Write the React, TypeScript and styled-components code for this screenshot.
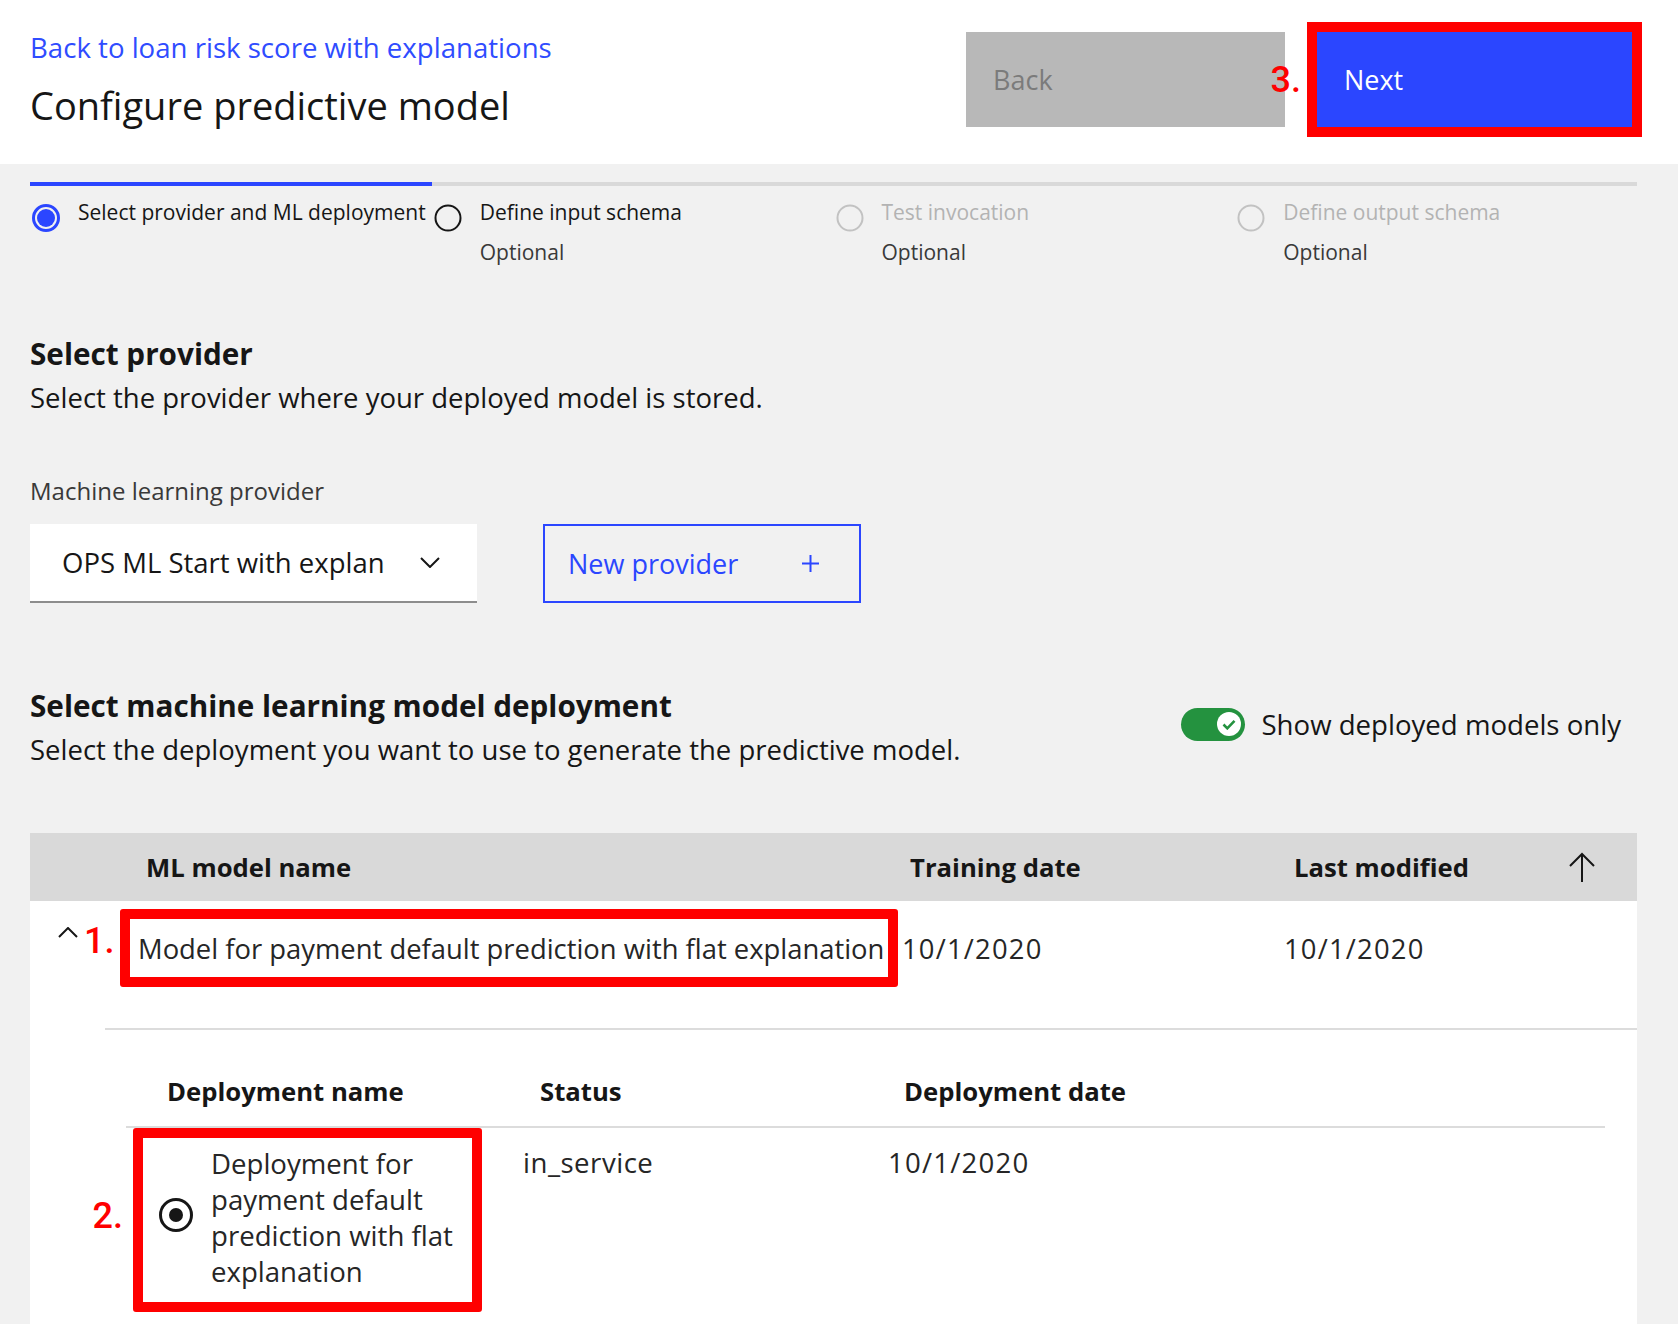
import React from 'react';
import styled, { createGlobalStyle } from 'styled-components';

const GlobalStyle = createGlobalStyle`
  html, body { margin: 0; padding: 0; }
  body {
    background: #f1f1f1;
    font-family: "Open Sans", "Noto Sans", Roboto, sans-serif;
    color: #161616;
  }
  * { box-sizing: border-box; }
`;

const Page = styled.div`
  width: 1678px;
  min-height: 1324px;
  background: #f1f1f1;
  overflow: hidden;
`;

/* ---------- Header ---------- */
const Header = styled.header`
  height: 164px;
  background: #ffffff;
  display: flex;
  justify-content: space-between;
  padding: 0 46px 0 30px;
`;

const TitleBlock = styled.div`
  padding-top: 30px;
`;

const BackLink = styled.a`
  display: block;
  font-size: 27.6px;
  line-height: 34px;
  color: #2f4cff;
  text-decoration: none;
`;

const Title = styled.h1`
  margin: 19px 0 0;
  font-size: 38px;
  line-height: 44px;
  font-weight: 400;
  color: #161616;
`;

const ButtonGroup = styled.div`
  display: flex;
  gap: 32px;
  padding-top: 32px;
`;

const HeaderButton = styled.button<{ $primary?: boolean; $width: number }>`
  position: relative;
  width: ${(p) => p.$width}px;
  height: 95px;
  border: none;
  border-radius: 0;
  padding: 0 0 0 27px;
  text-align: left;
  font-family: inherit;
  font-size: 27px;
  background: ${(p) => (p.$primary ? '#2b46ff' : '#b8b8b8')};
  color: ${(p) => (p.$primary ? '#ffffff' : '#7b7b7b')};
  box-shadow: ${(p) => (p.$primary ? '0 0 0 10px #ff0000' : 'none')};
`;

const Marker = styled.span`
  font-family: Roboto, "Liberation Sans", sans-serif;
  font-size: 36px;
  line-height: 36px;
  font-weight: 500;
  color: #ff0000;
  white-space: nowrap;
`;

const FloatingMarker = styled(Marker)<{ $right: number; $top: number }>`
  position: absolute;
  right: calc(100% + ${(p) => p.$right}px);
  top: ${(p) => p.$top}px;
`;

/* ---------- Progress ---------- */
const Progress = styled.ol`
  list-style: none;
  margin: 0;
  padding: 18px 41px 0 30px;
  display: grid;
  grid-template-columns: repeat(4, 1fr);
`;

const Step = styled.li<{ $active?: boolean }>`
  border-top: 4px solid ${(p) => (p.$active ? '#2b46ff' : '#d9d9d9')};
  display: flex;
  padding-top: 6px;
`;

const StepIcon = styled.svg`
  flex-shrink: 0;
  width: 28px;
  height: 28px;
  margin: 12px 0 0 2px;
`;

const StepText = styled.div`
  margin-left: 18px;
  font-size: 21px;
  line-height: 40px;
  white-space: nowrap;
`;

const StepLabel = styled.div<{ $disabled?: boolean }>`
  color: ${(p) => (p.$disabled ? '#b3b3b3' : '#161616')};
`;

const StepOptional = styled.div`
  color: #393939;
`;

/* ---------- Sections ---------- */
const Section = styled.section`
  padding: 0 41px 0 30px;
`;

const SectionHeadRow = styled.div<{ $top: number }>`
  display: flex;
  justify-content: space-between;
  align-items: flex-start;
  margin-top: ${(p) => p.$top}px;
`;

const SectionTitle = styled.h2`
  margin: 0;
  font-size: 29.7px;
  line-height: 36px;
  font-weight: 700;
`;

const SectionDesc = styled.p`
  margin: 6px 0 0;
  font-size: 27.5px;
  line-height: 40px;
`;

const FieldLabel = styled.div`
  margin-top: 58px;
  font-size: 24px;
  line-height: 30px;
  color: #393939;
`;

const FieldRow = styled.div`
  display: flex;
  gap: 66px;
  margin-top: 18px;
`;

const Dropdown = styled.div`
  width: 447px;
  height: 79px;
  background: #ffffff;
  border-bottom: 2px solid #8d8d8d;
  display: flex;
  align-items: center;
  justify-content: space-between;
  padding: 0 37px 0 32px;
`;

const DropdownValue = styled.span`
  white-space: nowrap;
  font-size: 27.5px;
`;

const GhostButton = styled.button`
  width: 318px;
  height: 79px;
  background: transparent;
  border: 2px solid #2b46ff;
  display: flex;
  align-items: center;
  justify-content: space-between;
  padding: 0 40px 0 23px;
  font-family: inherit;
  font-size: 27px;
  color: #2b46ff;
`;

const ToggleGroup = styled.label`
  display: flex;
  align-items: center;
  gap: 16px;
  margin: 18px 16px 0 0;
  font-size: 27.6px;
  line-height: 36px;
`;

const ToggleTrack = styled.span`
  width: 64px;
  height: 33px;
  border-radius: 17px;
  background: #24923f;
  display: flex;
  align-items: center;
  justify-content: flex-end;
  padding-right: 4px;
`;

const ToggleKnob = styled.span`
  width: 24px;
  height: 24px;
  border-radius: 50%;
  background: #ffffff;
  display: flex;
  align-items: center;
  justify-content: center;
`;

/* ---------- Table ---------- */
const Table = styled.div`
  margin: 63px 41px 0 30px;
  background: #ffffff;
  min-height: 500px;
`;

const TableHead = styled.div`
  height: 68px;
  background: #d9d9d9;
  display: grid;
  grid-template-columns: 116px 764px 384px 274px 30px 1fr;
  align-items: center;
  font-size: 25.7px;
  font-weight: 700;
`;

const ModelRow = styled.div`
  display: grid;
  grid-template-columns: 90px 782px 382px 1fr;
  align-items: center;
  padding-top: 8px;
  font-size: 27.4px;
`;

const ExpandCell = styled.div`
  align-self: start;
  display: flex;
  gap: 6px;
  padding: 0 0 0 28px;
`;

const ExpandIcon = styled.svg`
  margin-top: 18px;
  flex-shrink: 0;
`;

const MarkerInline = styled(Marker)`
  margin-top: 14px;
`;

const Highlight = styled.div<{ $w: number; $h: number }>`
  position: relative;
  width: ${(p) => p.$w}px;
  height: ${(p) => p.$h}px;
  border: 10px solid #ff0000;
  border-radius: 3px;
  display: flex;
  white-space: nowrap;
`;

const ModelName = styled.span`
  align-self: center;
  padding-left: 8px;
  color: #262626;
`;

const CellText = styled.span<{ $spacing?: number }>`
  color: #262626;
  letter-spacing: ${(p) => p.$spacing ?? 0}px;
`;

const Divider = styled.div`
  height: 2px;
  background: #dcdcdc;
  margin: 41px 0 0 75px;
`;

const SubTable = styled.div`
  margin: 0 32px 0 96px;
`;

const SubHead = styled.div`
  display: grid;
  grid-template-columns: 373px 364px 1fr;
  padding: 44px 0 16px 41px;
  font-size: 25.7px;
  line-height: 36px;
  font-weight: 700;
  border-bottom: 2px solid #dcdcdc;
`;

const SubRow = styled.div`
  display: grid;
  grid-template-columns: 390px 365px 1fr;
  align-items: start;
  padding-left: 7px;
  font-size: 27.6px;
  line-height: 36px;
`;

const SubCell = styled.div<{ $spacing?: number }>`
  padding-top: 16px;
  color: #262626;
  letter-spacing: ${(p) => p.$spacing ?? 0}px;
`;

const Radio = styled.svg`
  flex-shrink: 0;
  margin: 60px 0 0 16px;
`;

const DeploymentName = styled.span`
  width: 262px;
  margin: 7px 0 0 18px;
  white-space: normal;
  color: #262626;
`;

const StepCircle = ({ kind }: { kind: 'current' | 'incomplete' | 'disabled' }) => (
  <StepIcon viewBox="0 0 28 28">
    {kind === 'current' ? (
      <>
        <circle cx="14" cy="14" r="12.5" fill="none" stroke="#2b46ff" strokeWidth="3" />
        <circle cx="14" cy="14" r="9" fill="#2b46ff" />
      </>
    ) : (
      <circle
        cx="14"
        cy="14"
        r="12.5"
        fill="none"
        stroke={kind === 'incomplete' ? '#161616' : '#c2c2c2'}
        strokeWidth="2"
      />
    )}
  </StepIcon>
);

export default function App() {
  return (
    <Page>
      <GlobalStyle />
      <Header>
        <TitleBlock>
          <BackLink href="#">Back to loan risk score with explanations</BackLink>
          <Title>Configure predictive model</Title>
        </TitleBlock>
        <ButtonGroup>
          <HeaderButton $width={319}>Back</HeaderButton>
          <HeaderButton $primary $width={315}>
            <FloatingMarker $right={16} $top={30}>3.</FloatingMarker>
            Next
          </HeaderButton>
        </ButtonGroup>
      </Header>

      <Progress>
        <Step $active>
          <StepCircle kind="current" />
          <StepText>
            <StepLabel>Select provider and ML deployment</StepLabel>
          </StepText>
        </Step>
        <Step>
          <StepCircle kind="incomplete" />
          <StepText>
            <StepLabel>Define input schema</StepLabel>
            <StepOptional>Optional</StepOptional>
          </StepText>
        </Step>
        <Step>
          <StepCircle kind="disabled" />
          <StepText>
            <StepLabel $disabled>Test invocation</StepLabel>
            <StepOptional>Optional</StepOptional>
          </StepText>
        </Step>
        <Step>
          <StepCircle kind="disabled" />
          <StepText>
            <StepLabel $disabled>Define output schema</StepLabel>
            <StepOptional>Optional</StepOptional>
          </StepText>
        </Step>
      </Progress>

      <Section>
        <SectionHeadRow $top={64}>
          <div>
            <SectionTitle>Select provider</SectionTitle>
            <SectionDesc>Select the provider where your deployed model is stored.</SectionDesc>
          </div>
        </SectionHeadRow>
        <FieldLabel>Machine learning provider</FieldLabel>
        <FieldRow>
          <Dropdown>
            <DropdownValue>OPS ML Start with explan</DropdownValue>
            <svg width="20" height="11" viewBox="0 0 20 11">
              <path d="M1 1l9 9 9-9" fill="none" stroke="#161616" strokeWidth="2" />
            </svg>
          </Dropdown>
          <GhostButton>
            New provider
            <svg width="17" height="17" viewBox="0 0 17 17">
              <path d="M8.5 0v17M0 8.5h17" stroke="#2b46ff" strokeWidth="2" />
            </svg>
          </GhostButton>
        </FieldRow>

        <SectionHeadRow $top={85}>
          <div>
            <SectionTitle>Select machine learning model deployment</SectionTitle>
            <SectionDesc>Select the deployment you want to use to generate the predictive model.</SectionDesc>
          </div>
          <ToggleGroup>
            <ToggleTrack>
              <ToggleKnob>
                <svg width="14" height="11" viewBox="0 0 14 11">
                  <path d="M1.5 5.5l3.8 3.8L12.5 1.8" fill="none" stroke="#24923f" strokeWidth="2.6" />
                </svg>
              </ToggleKnob>
            </ToggleTrack>
            Show deployed models only
          </ToggleGroup>
        </SectionHeadRow>
      </Section>

      <Table>
        <TableHead>
          <span />
          <span>ML model name</span>
          <span>Training date</span>
          <span>Last modified</span>
          <svg width="28" height="30" viewBox="0 0 28 30">
            <path d="M14 2v28M2 14L14 2l12 12" fill="none" stroke="#161616" strokeWidth="2" />
          </svg>
          <span />
        </TableHead>

        <ModelRow>
          <ExpandCell>
            <ExpandIcon width="20" height="11" viewBox="0 0 20 11">
              <path d="M1 10l9-9 9 9" fill="none" stroke="#161616" strokeWidth="2" />
            </ExpandIcon>
            <MarkerInline>1.</MarkerInline>
          </ExpandCell>
          <Highlight $w={778} $h={78}>
            <ModelName>Model for payment default prediction with flat explanation</ModelName>
          </Highlight>
          <CellText $spacing={1.2}>10/1/2020</CellText>
          <CellText $spacing={1.2}>10/1/2020</CellText>
        </ModelRow>

        <Divider />

        <SubTable>
          <SubHead>
            <span>Deployment name</span>
            <span>Status</span>
            <span>Deployment date</span>
          </SubHead>
          <SubRow>
            <Highlight $w={349} $h={184}>
              <FloatingMarker $right={20} $top={60}>2.</FloatingMarker>
              <Radio width="34" height="34" viewBox="0 0 34 34">
                <circle cx="17" cy="17" r="15.5" fill="#fff" stroke="#161616" strokeWidth="3" />
                <circle cx="17" cy="17" r="7" fill="#161616" />
              </Radio>
              <DeploymentName>Deployment for payment default prediction with flat explanation</DeploymentName>
            </Highlight>
            <SubCell $spacing={0.5}>in_service</SubCell>
            <SubCell $spacing={1.2}>10/1/2020</SubCell>
          </SubRow>
        </SubTable>
      </Table>
    </Page>
  );
}
